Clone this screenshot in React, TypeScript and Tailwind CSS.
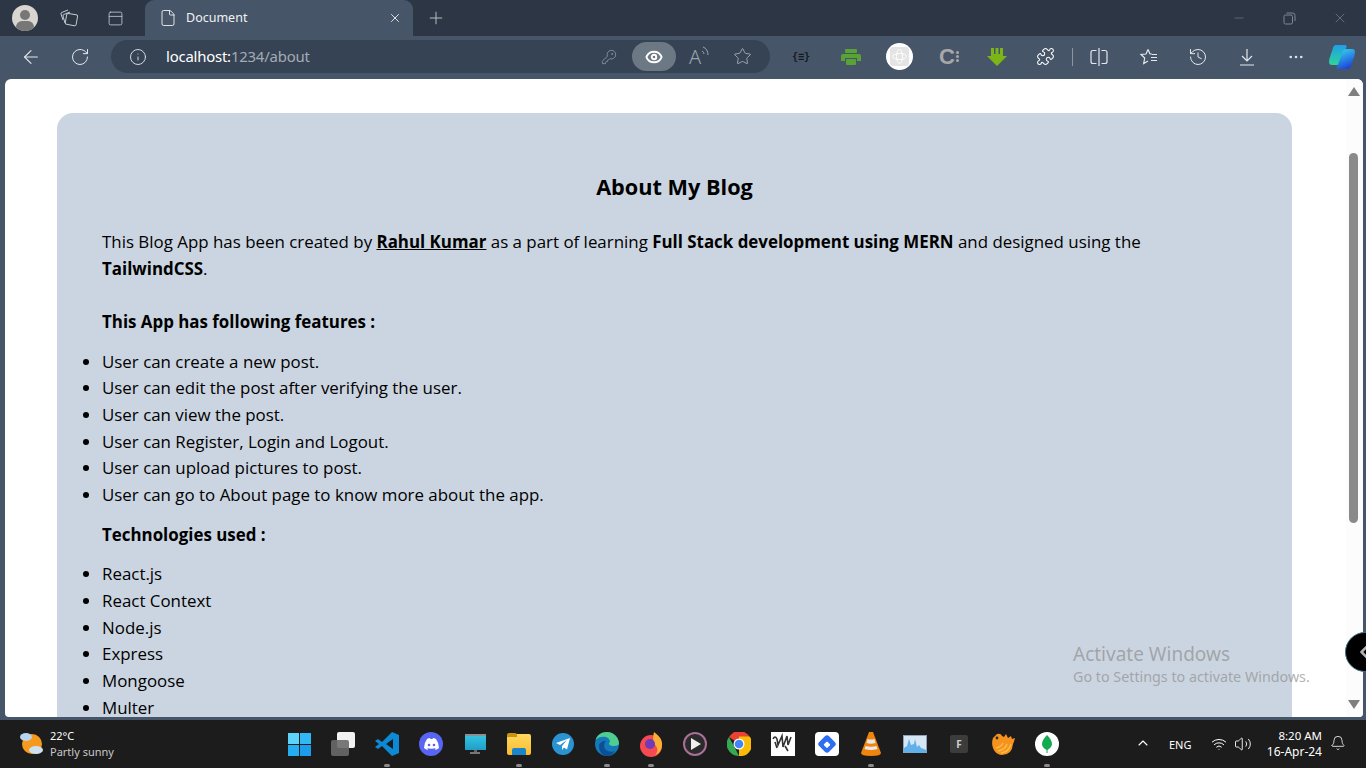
import React from 'react';
import {
  ArrowLeft, Bell, ChevronUp, ChevronLeft, Download, Eye, File, History, Info, KeyRound, Minus, MoreHorizontal,
  PanelTop, Plus, Puzzle, RotateCw, Star, Volume2, Wifi, X,
} from 'lucide-react';

const features = [
  'User can create a new post.',
  'User can edit the post after verifying the user.',
  'User can view the post.',
  'User can Register, Login and Logout.',
  'User can upload pictures to post.',
  'User can go to About page to know more about the app.',
];
const techs = ['React.js', 'React Context', 'Node.js', 'Express', 'Mongoose', 'Multer'];

const Dot = () => <span className="absolute left-1/2 -translate-x-1/2 bottom-[1px] w-[6px] h-[3px] rounded-full bg-[#8b8b8b]" />;

function TaskIcon({ children, open }: { children: React.ReactNode; open?: boolean }) {
  return (
    <div className="relative w-[44px] h-[48px] flex items-center justify-center">
      {children}
      {open && <Dot />}
    </div>
  );
}

export default function App() {
  return (
    <div className="h-screen w-full flex flex-col overflow-hidden bg-[#475569] font-['Open_Sans',sans-serif] relative">
      {/* tabs */}
      <div className="h-[36px] bg-[#2c3644] flex items-center shrink-0">
        <div className="w-[26px] h-[26px] rounded-full bg-[#d9d5d0] ml-[12px] relative overflow-hidden">
          <div className="absolute top-[5px] left-[8px] w-[10px] h-[10px] rounded-full bg-[#777]" />
          <div className="absolute top-[16px] left-[4px] w-[18px] h-[12px] rounded-full bg-[#777]" />
        </div>
        <svg className="ml-[21px]" width="20" height="20" viewBox="0 0 20 20" fill="none" stroke="#c3c8cf" strokeWidth="1">
          <rect x="7" y="6" width="11" height="11" rx="1.5" transform="rotate(10 12 11)" />
          <path d="M6 15 4 8q-.3-1.200 1-1.600L11 4M4 12 2 6q-.3-1.200 1-1.600L9 2" />
        </svg>
        <PanelTop className="ml-[28px] text-[#c3c8cf]" size={17} strokeWidth={1.2} />
        <div className="ml-[21px] w-[268px] h-[36px] bg-[#475569] rounded-t-[9px] flex items-center pl-[14px] pr-[11px] text-white">
          <File size={18} strokeWidth={1.1} />
          <span className="ml-[9px] text-[12.5px] text-[#f2f2f2] font-['Noto_Sans',sans-serif]">Document</span>
          <X className="ml-auto" size={14} strokeWidth={1.4} />
        </div>
        <Plus className="ml-[13px] text-[#c3c8cf]" size={20} strokeWidth={1.1} />
        <div className="ml-auto flex items-center text-[#7f8894]">
          <Minus size={14} strokeWidth={1} />
          <svg className="ml-[37px]" width="13" height="13" viewBox="0 0 13 13" fill="none" stroke="#7f8894" strokeWidth="1">
            <rect x="1" y="3" width="8.5" height="9" rx="1.5" />
            <path d="M3.5 1h6q2.500 0 2.500 2.500v5.500" />
          </svg>
          <X className="ml-[36px] mr-[18px]" size={16} strokeWidth={1} />
        </div>
      </div>

      {/* toolbar */}
      <div className="h-[43px] pb-[2px] flex items-center shrink-0 text-[#e4e7eb]">
        <ArrowLeft className="ml-[20px]" size={22} strokeWidth={1.2} />
        <RotateCw className="ml-[28px]" size={20} strokeWidth={1.2} />
        <div className="ml-[21px] w-[659px] h-[33px] rounded-full bg-[#364354] flex items-center">
          <Info className="ml-[18px]" size={18} strokeWidth={1.2} />
          <span className="ml-[19px] text-[14.9px] font-['Noto_Sans',sans-serif] tracking-[-0.2px] text-white">localhost:<span className="text-[#a3abb5]">1234/about</span></span>
          <KeyRound className="ml-auto text-[#9aa3ae]" size={16} strokeWidth={1.1} />
          <div className="ml-[15px] w-[44px] h-[29px] rounded-full bg-[#6d7885] flex items-center justify-center">
            <Eye size={18} strokeWidth={2.6} className="text-white" />
          </div>
          <div className="ml-[13px] w-[20px] h-[20px] flex items-end text-[#9aa3ae] relative">
            <span className="text-[20px] leading-[20px] font-['Noto_Sans',sans-serif] font-light">A</span>
            <svg className="absolute -right-[1px] -top-[1px]" width="9" height="11" viewBox="0 0 9 11" fill="none" stroke="currentColor"><path d="M1 5q2 1 2 3M2 1q5 2 5 8" /></svg>
          </div>
          <Star className="ml-[24px] mr-[18px] text-[#a8b0ba]" size={19} strokeWidth={1.1} />
        </div>
        {/* extensions */}
        <span className="ml-[22px] w-[18px] text-center text-[10px] font-bold text-[#141a22] font-['DejaVu_Sans_Mono',monospace]">{'{≡}'}</span>
        <svg className="ml-[31px]" width="20" height="16" viewBox="0 0 20 16" fill="#59a336">
          <rect x="4" y="0" width="12" height="4" rx="1" />
          <path d="M2 5h16q2 0 2 2v5h-4V9H4v3H0V7q0-2 2-2z" />
          <rect x="5" y="10" width="10" height="6" rx="1" />
        </svg>
        <div className="ml-[25px] w-[27px] h-[27px] rounded-full bg-white flex items-center justify-center">
          <div className="w-[19px] h-[19px] rounded-[3px] bg-[#e4e4e4] flex items-center justify-center">
            <svg width="15" height="15" viewBox="0 0 15 15" fill="none" stroke="#fff"><ellipse cx="7.5" cy="7.5" rx="7" ry="3" /><ellipse cx="7.5" cy="7.5" rx="3" ry="7" /></svg>
          </div>
        </div>
        <div className="ml-[26px] w-[20px] flex items-center">
          <span className="text-[22px] leading-none font-bold text-[#a8a8a8] font-['Liberation_Sans',sans-serif]">C</span>
          <span className="flex flex-col gap-[1px] ml-[1px]">
            <i className="block w-[3px] h-[3px] rounded-full bg-[#a8a8a8]" />
            <i className="block w-[3px] h-[3px] rounded-full bg-[#a8a8a8]" />
            <i className="block w-[3px] h-[3px] rounded-full bg-[#a8a8a8]" />
          </span>
        </div>
        <svg className="ml-[28px]" width="20" height="18" viewBox="0 0 20 18" fill="#7cb518">
          <path d="M4 0h3v6h1.500V0h3v6H13V0h3v8h4l-10 10L0 8h4z" />
        </svg>
        <Puzzle className="ml-[29px] text-white" size={19} strokeWidth={1.3} />
        <div className="ml-[17px] w-[1px] h-[18px] bg-[#8c95a1]" />
        <svg className="ml-[16px]" width="20" height="20" viewBox="0 0 20 20" fill="none" stroke="currentColor" strokeWidth="1.2">
          <path d="M10 1v18M7.500 3.500H4q-2 0-2 2v9q0 2 2 2h3.500M12.500 3.500H16q2 0 2 2v9q0 2-2 2h-3.500" />
        </svg>
        <svg className="ml-[30px]" width="19" height="18" viewBox="0 0 19 18" fill="none" stroke="currentColor" strokeWidth="1.2">
          <path d="M9 1.500 11 6h2M9 1.500 7 6l-5 .5 3.700 3.500-1 5.500L9 13M12 9.500h6M12 12.500h6M13 6.500h5" />
        </svg>
        <History className="ml-[30px]" size={20} strokeWidth={1.2} />
        <svg className="ml-[31px]" width="16" height="18" viewBox="0 0 16 18" fill="none" stroke="currentColor" strokeWidth="1.2">
          <path d="M8 1v11M3 8l5 5 5-5M1 17h14" />
        </svg>
        <MoreHorizontal className="ml-[32px]" size={18} strokeWidth={1.5} />
        <svg className="ml-[23px]" width="28" height="26" viewBox="0 0 28 26">
          <defs>
            <linearGradient id="copA" x1="0" y1="0" x2="0" y2="1"><stop offset="0" stopColor="#1f9fe8" /><stop offset="1" stopColor="#2dd49a" /></linearGradient>
            <linearGradient id="copB" x1="0.2" y1="0" x2="0.6" y2="1"><stop offset="0" stopColor="#36d0f0" /><stop offset="1" stopColor="#1c3fd8" /></linearGradient>
          </defs>
          <path d="M8 1h9q2 0 1.500 2L13 19q-.6 2-3 2H4q-3 0-3-3 0-3 2-8l2-6q.6-3 3-3z" fill="url(#copA)" />
          <path d="M19 5h5q3 0 3 3 0 3-2 8l-2 6q-1 3-3 3h-9q-3 0-2-2l6-16q1-2 4-2z" fill="url(#copB)" />
        </svg>
      </div>

      {/* page */}
      <div className="flex-1 min-h-0 mr-[3px] ml-[5px] bg-white rounded-t-[6px] rounded-b-[4px] flex overflow-hidden">
        <div className="flex-1 min-w-0 overflow-hidden pt-[34px] pl-[52px] pr-[54px]">
          <div className="bg-[#cbd5e1] rounded-[16px] h-[800px] pt-[56px] px-[45px] text-black text-[16.9px] leading-[26.67px]">
            <h1 className="text-center text-[21.7px] leading-[36px] font-bold">About My Blog</h1>
            <p className="mt-[24px]">
              This Blog App has been created by <b className="underline">Rahul Kumar</b> as a part of learning <b>Full Stack development using MERN</b> and designed using the <b>TailwindCSS</b>.
            </p>
            <h2 className="mt-[26.67px] font-bold">This App has following features :</h2>
            <ul className="list-disc mt-[13px]">
              {features.map((f) => <li key={f}>{f}</li>)}
            </ul>
            <h2 className="mt-[13px] font-bold">Technologies used :</h2>
            <ul className="list-disc mt-[13px]">
              {techs.map((t) => <li key={t}>{t}</li>)}
            </ul>
          </div>
        </div>
        <div className="w-[17px] shrink-0 flex flex-col items-center pr-[2px] bg-[#fcfcfc]">
          <div className="mt-[8px] w-0 h-0 border-x-[6px] border-x-transparent border-b-[9px] border-b-[#7f7f7f]" />
          <div className="mt-[57px] w-[9px] h-[370px] rounded-full bg-[#8a8a8a]" />
          <div className="mt-auto mb-[8px] w-0 h-0 border-x-[6px] border-x-transparent border-t-[9px] border-t-[#7f7f7f]" />
        </div>
      </div>
      <div className="h-[3px] shrink-0" />

      {/* taskbar */}
      <div className="h-[48px] shrink-0 bg-[#1c1c1c] flex items-center relative text-white font-['Noto_Sans',sans-serif]">
        <svg className="absolute left-[18px] top-[10px]" width="26" height="26" viewBox="0 0 26 26">
          <circle cx="14" cy="14" r="10" fill="#f59a1e" />
          <ellipse cx="8" cy="7" rx="6" ry="4" fill="#b8d4ee" />
          <ellipse cx="18" cy="20" rx="7" ry="4" fill="#cfe0f0" />
        </svg>
        <div className="absolute left-[50px] top-[8px] text-[11px] leading-[16px]">
          <div>22°C</div>
          <div className="text-[#c9c9c9]">Partly sunny</div>
        </div>

        <div className="absolute left-[277px] top-0 flex">
          <TaskIcon>
            <div className="grid grid-cols-2 gap-[1px] w-[23px] h-[23px]">
              <i className="bg-[#5dd3f9]" /><i className="bg-[#2fb8f3]" /><i className="bg-[#22aef0]" /><i className="bg-[#1c9deb]" />
            </div>
          </TaskIcon>
          <TaskIcon>
            <div className="relative w-[24px] h-[24px]">
              <div className="absolute right-0 top-0 w-[18px] h-[16px] rounded-[2px] bg-[#f2f2f2]" />
              <div className="absolute left-0 bottom-0 w-[18px] h-[16px] rounded-[2px] bg-[#6a6a6a]/90" />
            </div>
          </TaskIcon>
          <TaskIcon open>
            <svg width="24" height="24" viewBox="0 0 24 24"><path d="M17 0 7 10 3 7 0 9l4 3-4 3 3 2 4-3 10 10 7-3V3zm1 7v10l-7-5z" fill="#0d8ad6" /></svg>
          </TaskIcon>
          <TaskIcon>
            <div className="w-[24px] h-[24px] rounded-full bg-[#5865f2] flex items-center justify-center">
              <svg width="15" height="12" viewBox="0 0 15 12"><path d="M3 1q2-1 3-1l.5 1h2L9 0q1 0 3 1 3 4 3 9-2 1.500-3.500 2L11 10.500q1-.3 1.500-.8-5 2.300-10 0 .5.500 1.500.8L3.500 12Q2 11.500 0 10q0-5 3-9z" fill="#fff" /><circle cx="5" cy="7" r="1.3" fill="#5865f2" /><circle cx="10" cy="7" r="1.3" fill="#5865f2" /></svg>
            </div>
          </TaskIcon>
          <TaskIcon>
            <div className="flex flex-col items-center">
              <div className="w-[21px] h-[16px] bg-gradient-to-b from-[#35c3df] to-[#1f9dc8] border-t-2 border-[#8a8f96]" />
              <div className="w-[3px] h-[2px] bg-[#666]" />
              <div className="w-[10px] h-[2px] bg-[#777]" />
            </div>
          </TaskIcon>
          <TaskIcon open>
            <div className="relative w-[24px] h-[21px] rounded-[2px] bg-gradient-to-b from-[#ffd75e] to-[#f8bd2c]">
              <div className="absolute -top-[1px] left-0 w-[10px] h-[4px] rounded-t-[2px] bg-[#c9920f]" />
              <div className="absolute bottom-0 left-[5px] w-[14px] h-[7px] rounded-t-[2px] bg-[#1b85c9]" />
            </div>
          </TaskIcon>
          <TaskIcon>
            <div className="w-[22px] h-[22px] rounded-full bg-[#2b93d1] flex items-center justify-center">
              <svg width="14" height="12" viewBox="0 0 14 12"><path d="M14 0 0 5l4 2 7-5-5 6v4l2-2.500 3 2z" fill="#fff" /></svg>
            </div>
          </TaskIcon>
          <TaskIcon open>
            <svg width="24" height="24" viewBox="0 0 24 24">
              <circle cx="12" cy="12" r="12" fill="#1479b8" />
              <path d="M24 12c0-6-5-12-12-12C6 0 2 3 .5 8 3 5 7 4 11 5c3 1 4 3 4 5-2 1-1 4 3 4 3 0 6-1 6-2z" fill="#4fcf8f" />
              <path d="M4 14c0-3 3-5 7-5-2 2-3 6 0 9 3 2 6 2 9 1-2 3-5 5-8 5-5 0-8-5-8-10z" fill="#0d4f94" />
            </svg>
          </TaskIcon>
          <TaskIcon open>
            <svg width="24" height="25" viewBox="0 0 24 25">
              <circle cx="12" cy="14" r="11" fill="#f54a4f" />
              <path d="M15 0c4 3 9 7 8 14-1 6-4 8-7 9 3-3 3-6 1-9-2-3-4-5-2-14z" fill="#fbb034" />
              <circle cx="11" cy="12" r="5" fill="#6f3bb8" />
            </svg>
          </TaskIcon>
          <TaskIcon>
            <div className="w-[24px] h-[24px] rounded-full border-2 border-[#a87098] bg-[#2b2b2b] flex items-center justify-center">
              <div className="ml-[2px] w-0 h-0 border-y-[6px] border-y-transparent border-l-[10px] border-l-[#f0f0f0]" />
            </div>
          </TaskIcon>
          <TaskIcon>
            <svg width="24" height="24" viewBox="0 0 24 24">
              <path d="M12 12 2 5a12 12 0 0 1 20.500-.500z" fill="#ea4335" />
              <path d="M12 24A12 12 0 0 0 22.500 4.500H12z" fill="#fbbc05" />
              <path d="M12 24A12 12 0 0 1 2 5l6 11z" fill="#34a853" />
              <circle cx="12" cy="12" r="5.5" fill="#fff" />
              <circle cx="12" cy="12" r="4.3" fill="#4285f4" />
            </svg>
          </TaskIcon>
          <TaskIcon>
            <svg width="24" height="24" viewBox="0 0 24 24">
              <rect width="24" height="24" fill="#fff" />
              <path d="M2 7q2-4 4 0l1 6 4-9 1 11 4-11 1 9 3-8M4 10l2 6M14 14l3 5" fill="none" stroke="#333" strokeWidth="1.6" />
            </svg>
          </TaskIcon>
          <TaskIcon>
            <div className="w-[24px] h-[24px] rounded-[4px] bg-white flex items-center justify-center">
              <div className="w-[14px] h-[14px] rotate-45 rounded-[3px] bg-[#2d6df0] flex items-center justify-center">
                <div className="w-[5px] h-[5px] rounded-[1px] bg-white" />
              </div>
            </div>
          </TaskIcon>
          <TaskIcon open>
            <svg width="20" height="24" viewBox="0 0 20 24">
              <path d="M8 0h4l8 21q0 3-10 3T0 21z" fill="#f0840c" />
              <path d="M6.5 7q3.500 1 7 0l1 4q-4.500 1.500-9 0zM4.500 14q5.500 1.500 11 0l1 3q-6.500 2-13 0z" fill="#e8e8e8" />
            </svg>
          </TaskIcon>
          <TaskIcon>
            <svg width="24" height="18" viewBox="0 0 24 18">
              <rect x="0.5" y="0.5" width="23" height="17" fill="#d5e6f5" stroke="#8da3b5" />
              <path d="M1 17V13l3-2 2-7 2 6 3-1 1-5 2 8 2-2 2 3 3 1 2 1v4z" fill="#62b0ea" />
            </svg>
          </TaskIcon>
          <TaskIcon>
            <div className="w-[18px] h-[18px] rounded-[2px] bg-[#3c3c3c] flex items-center justify-center text-[10px] font-bold text-[#d0d0d0]">F</div>
          </TaskIcon>
          <TaskIcon>
            <svg width="24" height="22" viewBox="0 0 24 22">
              <path d="M2 5 6 1q4-1 5 2l2 1 2-3 2 4 3-2 1 3 3-1q-1 4-2 6-1 11-11 11C4 22-1 13 2 5z" fill="#f6931e" />
              <path d="M10 20q8-1 10-9M7 18q7-1 9-7M5 15q5-1 7-5" fill="none" stroke="#fbc04a" strokeWidth="1.4" />
              <circle cx="6" cy="5" r="1.4" fill="#2a2a2a" />
            </svg>
          </TaskIcon>
          <TaskIcon open>
            <div className="w-[24px] h-[24px] rounded-full bg-white flex items-center justify-center">
              <svg width="10" height="18" viewBox="0 0 10 18"><path d="M5 0c3 3 5 6 5 9s-3 5-4.500 6V18h-1v-3C3 14 0 12 0 9s2-6 5-9z" fill="#13aa52" /></svg>
            </div>
          </TaskIcon>
        </div>

        {/* tray */}
        <ChevronUp className="absolute left-[1135px] top-[15px]" size={16} strokeWidth={1.6} />
        <span className="absolute left-[1169px] top-[17px] text-[11px] leading-[15px]">ENG</span>
        <Wifi className="absolute left-[1211px] top-[16px]" size={16} strokeWidth={1.5} />
        <Volume2 className="absolute left-[1234px] top-[15px]" size={18} strokeWidth={1.2} />
        <div className="absolute right-[44px] top-[8px] text-[11.5px] leading-[16px] text-right">
          <div>8:20 AM</div>
          <div className="text-[12px]">16-Apr-24</div>
        </div>
        <Bell className="absolute left-[1330px] top-[15px]" size={16} strokeWidth={1.2} />
      </div>

      {/* overlays */}
      <div className="absolute left-[1345px] top-[632px] w-[40px] h-[40px] rounded-full bg-black border border-[#3c6e80] flex items-center pl-[8px]">
        <ChevronLeft size={20} strokeWidth={3} className="text-[#b0b0b0]" />
      </div>
      <div className="absolute left-[1073px] top-[642px] text-[#8f8f8f]/70 font-['Noto_Sans',sans-serif] pointer-events-none">
        <div className="text-[19px] leading-[24px]">Activate Windows</div>
        <div className="text-[14.3px] leading-[22px]">Go to Settings to activate Windows.</div>
      </div>
    </div>
  );
}
